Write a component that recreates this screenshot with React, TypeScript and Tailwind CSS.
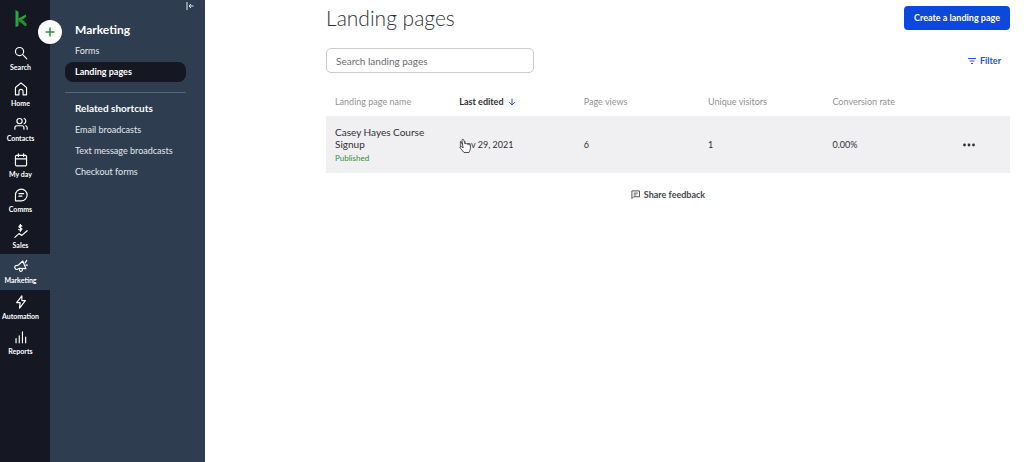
import type { ReactNode } from 'react'

type IconProps = { children: ReactNode }

function NavIcon({ children }: IconProps) {
  return (
    <svg
      viewBox="0 0 24 24"
      className="h-[14px] w-[14px]"
      fill="none"
      stroke="currentColor"
      strokeWidth={2}
      strokeLinecap="round"
      strokeLinejoin="round"
      aria-hidden="true"
    >
      {children}
    </svg>
  )
}

const navItems = [
  {
    label: 'Search',
    icon: (
      <>
        <circle cx="9.5" cy="9.5" r="7" />
        <path d="M14.5 14.5 L22 22" />
      </>
    ),
  },
  {
    label: 'Home',
    icon: <path d="M2.500 9.500 L12 1.500 L21.500 9.500 V22 H15.500 V16 a3.500 3.500 0 0 0 -7 0 V22 H2.500 Z" />,
  },
  {
    label: 'Contacts',
    icon: (
      <>
        <circle cx="9.5" cy="7" r="4.5" />
        <path d="M1.500 21 V18.500 a3.500 3.500 0 0 1 3.500 -3.500 H13.500 a3.500 3.500 0 0 1 3.500 3.500 V21" />
        <path d="M17.500 2.500 a5 5 0 0 1 0 9 M20 15 a3.500 3.500 0 0 1 2.500 3.500 V21" />
      </>
    ),
  },
  {
    label: 'My day',
    icon: (
      <>
        <rect x="2.500" y="4" width="19" height="18" rx="2" />
        <path d="M2.500 10 H21.500 M7.500 1.500 V6 M16.500 1.500 V6" />
      </>
    ),
  },
  {
    label: 'Comms',
    icon: (
      <>
        <path d="M2.500 22 V12 a10 10 0 1 1 10 10 Z" />
        <path d="M8.500 9.500 H16.500 M8.500 14 H13.500" />
      </>
    ),
  },
  {
    label: 'Sales',
    icon: (
      <>
        <path d="M1.500 23 L8.500 16.500 L13.500 19.500 L22.500 11.500" />
        <path d="M13.500 3.500 C12 2 8.500 2 8.500 4.500 C8.500 7 13.500 6 13.500 8.500 C13.500 11 10 11 8 9.200 M11 .5 V12.500" />
      </>
    ),
  },
  {
    label: 'Marketing',
    icon: (
      <>
        <path d="M15 3.500 L20.500 16.500 L9.500 16 L5.500 18 A3.800 3.800 0 0 1 2.500 11.500 L7.500 10.500 Z" />
        <path d="M9.500 17 C8.500 22 14.500 23.500 14.500 17 M19 6.500 L22 2.500 M20.500 10.500 H23" />
      </>
    ),
  },
  {
    label: 'Automation',
    icon: <path d="M13.500 1.500 L4.500 13 H10.500 L9.500 22.500 L19.500 9.500 H13.500 Z" />,
  },
  {
    label: 'Reports',
    icon: <path d="M3.500 22 V14.500 M9 22 V10 M14.500 22 V3 M20 22 V12" />,
  },
]

const shortcuts = ['Email broadcasts', 'Text message broadcasts', 'Checkout forms']

const columns = ['Landing page name', 'Last edited', 'Page views', 'Unique visitors', 'Conversion rate']

function NavRail() {
  return (
    <nav className="relative w-[50px] shrink-0 bg-[#151723] text-white" aria-label="Main">
      <div className="flex h-[41px] justify-center pt-[10px] pr-[9px]">
        <svg viewBox="0 0 24 34" className="h-[17px] w-3" role="img" aria-label="Keap">
          <path d="M1 0 L7 3.500 V32 L1 34 Z" fill="#2fa63b" />
          <path d="M7 17 L22 9 V14 L12 20.500 H7 Z" fill="#2fa63b" />
          <path d="M7 18 H13 L23 27 V32 H20 L7 21.500 Z" fill="#259334" />
        </svg>
      </div>
      <ul className="grid h-[320px] auto-rows-fr">
        {navItems.map((item) => (
          <li key={item.label} className={item.label === 'Marketing' ? 'bg-[#2e3d50]' : ''}>
            <a href="#" className="flex h-full flex-col items-center pt-[5px] pr-[9px]">
              <NavIcon>{item.icon}</NavIcon>
              <span className="mt-[2px] text-[7px] leading-[10px] font-bold">{item.label}</span>
            </a>
          </li>
        ))}
      </ul>
      <button
        type="button"
        aria-label="Add"
        className="absolute top-5 -right-3 z-10 flex h-6 w-6 items-center justify-center rounded-full bg-white text-[#2f8f3c] shadow"
      >
        <svg viewBox="0 0 12 12" className="h-3 w-3" fill="none" stroke="currentColor" strokeWidth={1.5}>
          <path d="M6 1.500 V10.500 M1.500 6 H10.500" />
        </svg>
      </button>
    </nav>
  )
}

function SubNav() {
  return (
    <aside className="relative w-[155px] shrink-0 bg-[#2e3d50] px-[15px] pt-5 text-[9px] text-[#e4e8ee]">
      <button type="button" aria-label="Collapse menu" className="absolute top-[2px] right-[11px]">
        <svg viewBox="0 0 8 8" className="h-2 w-2" fill="none" stroke="currentColor" strokeWidth={1}>
          <path d="M1 0 V8 M7.500 4 H3 M5 2 L3 4 L5 6" />
        </svg>
      </button>
      <h2 className="px-[10px] text-[12px] leading-5 font-bold text-white">Marketing</h2>
      <ul>
        <li>
          <a href="#" className="block px-[10px] leading-[22px]">Forms</a>
        </li>
        <li className="mr-1">
          <a href="#" className="block rounded-[8px] bg-[#151723] px-[10px] leading-5 font-bold text-white">
            Landing pages
          </a>
        </li>
      </ul>
      <hr className="mt-[10px] mr-1 border-[#56657a]" />
      <h3 className="mt-1 px-[10px] text-[10px] leading-[22px] font-bold text-white">Related shortcuts</h3>
      <ul>
        {shortcuts.map((s) => (
          <li key={s}>
            <a href="#" className="block px-[10px] leading-[21px]">{s}</a>
          </li>
        ))}
      </ul>
    </aside>
  )
}

function HandCursor() {
  return (
    <svg viewBox="0 0 12 16" className="pointer-events-none absolute top-[22px] left-[9px] h-4 w-3" aria-hidden="true">
      <path
        d="M4 9 L3 3 C2.600 1 4.400 .6 4.900 2.300 L6 6 C6.500 5.200 7.800 5.300 8 6.300 C8.700 5.700 9.700 6 9.900 6.900 C10.700 6.500 11.400 7 11.400 8 C11.500 11 11 13 10 14.500 H5 C4 13 2.500 12 1.300 10.200 C.6 9 1.800 8 2.700 8.800 L4 10 Z"
        fill="white"
        stroke="#3c3c44"
        strokeWidth=".9"
        strokeLinejoin="round"
      />
    </svg>
  )
}

function PagesTable() {
  return (
    <table className="mt-[14px] w-full table-fixed text-left text-[9px] text-[#303036]">
      <colgroup>
        {columns.map((c) => (
          <col key={c} className="w-2/11" />
        ))}
        <col className="w-1/11" />
      </colgroup>
      <thead>
        <tr className="h-[29px] text-[#929298]">
          {columns.map((c) =>
            c === 'Last edited' ? (
              <th key={c} className="px-[9px] font-bold text-[#303036]" aria-sort="descending">
                <button type="button" className="flex items-center gap-1">
                  {c}
                  <svg viewBox="0 0 8 8" className="h-2 w-2" fill="none" stroke="#2553d8" strokeWidth={1}>
                    <path d="M4 .5 V7 M1 4 L4 7 L7 4" />
                  </svg>
                </button>
              </th>
            ) : (
              <th key={c} className="px-[9px] font-normal">{c}</th>
            ),
          )}
          <th aria-label="Actions" />
        </tr>
      </thead>
      <tbody>
        <tr className="h-[57px] bg-[#f0eff1]">
          <td className="px-[9px]">
            <a href="#" className="block text-[10px] leading-3">Casey Hayes Course Signup</a>
            <span className="mt-[3px] block text-[8px] leading-[10px] text-[#2f8f3c]">Published</span>
          </td>
          <td className="relative px-[9px]">
            Nov 29, 2021
            <HandCursor />
          </td>
          <td className="px-[9px]">6</td>
          <td className="px-[9px]">1</td>
          <td className="px-[9px]">0.00%</td>
          <td>
            <button type="button" aria-label="More actions" className="flex px-[15px]">
              <svg viewBox="0 0 12 4" className="h-1 w-3" fill="#303036">
                <circle cx="1.500" cy="2" r="1.400" />
                <circle cx="6" cy="2" r="1.400" />
                <circle cx="10.500" cy="2" r="1.400" />
              </svg>
            </button>
          </td>
        </tr>
      </tbody>
    </table>
  )
}

export default function App() {
  return (
    <div className="flex min-h-screen bg-white font-['Lato',sans-serif]">
      <NavRail />
      <SubNav />
      <main className="min-w-0 flex-1 pt-[6px] pr-[14px] pl-[121px]">
        <header className="flex items-center justify-between">
          <h1 className="text-[21px] leading-6 font-light text-[#303036]">Landing pages</h1>
          <button
            type="button"
            className="h-6 rounded bg-[#0a49dc] px-[10px] text-[9px] font-bold whitespace-nowrap text-white"
          >
            Create a landing page
          </button>
        </header>
        <div className="mt-[18px] flex items-center justify-between">
          <input
            type="search"
            aria-label="Search landing pages"
            placeholder="Search landing pages"
            className="h-[25px] w-[208px] rounded-[5px] border border-[#cbcbcf] px-[9px] text-[10px] text-[#303036] placeholder:text-[#6c6c72]"
          />
          <button type="button" className="mr-[9px] flex items-center gap-1 text-[9px] font-bold text-[#2553d8]">
            <svg viewBox="0 0 8 8" className="h-2 w-2" fill="none" stroke="currentColor" strokeWidth={1}>
              <path d="M0 1.500 H8 M1.500 4 H6.500 M3 6.500 H5" />
            </svg>
            Filter
          </button>
        </div>
        <PagesTable />
        <button
          type="button"
          className="mx-auto mt-[15px] flex items-center gap-1 text-[9px] font-bold text-[#45454b]"
        >
          <svg viewBox="0 0 10 10" className="h-[9px] w-[9px]" fill="none" stroke="currentColor" strokeWidth={1}>
            <path d="M1 9.500 V1 H9.500 V7.500 H3 Z M3 3.500 H7.500 M3 5.500 H6" />
          </svg>
          Share feedback
        </button>
      </main>
    </div>
  )
}
